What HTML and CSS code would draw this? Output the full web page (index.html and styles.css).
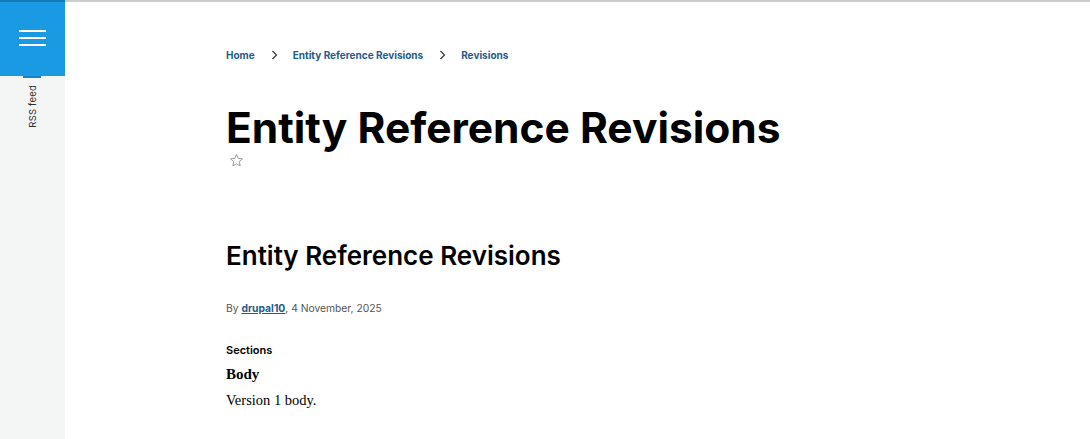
FILE: index.html
```html
<!DOCTYPE html>
<html lang="en">
<head>
<meta charset="utf-8">
<title>Entity Reference Revisions</title>
<link rel="stylesheet" href="styles.css">
</head>
<body>
<div class="page">
  <aside class="sidebar">
    <button class="menu-btn" aria-label="Main menu">
      <span class="bar"></span><span class="bar"></span><span class="bar"></span>
    </button>
    <div class="social">
      <a class="rss" href="#">RSS feed</a>
    </div>
  </aside>
  <main class="main">
    <nav class="breadcrumb">
      <a href="#">Home</a>
      <span class="sep"><svg width="7" height="10" viewBox="0 0 7 10"><path d="M1.5 1 L5.5 5 L1.5 9" fill="none" stroke="#333" stroke-width="1.2"/></svg></span>
      <a href="#">Entity Reference Revisions</a>
      <span class="sep"><svg width="7" height="10" viewBox="0 0 7 10"><path d="M1.5 1 L5.5 5 L1.5 9" fill="none" stroke="#333" stroke-width="1.2"/></svg></span>
      <a href="#">Revisions</a>
    </nav>
    <h1 class="page-title">Entity Reference Revisions</h1>
    <div class="star"><svg width="15" height="15" viewBox="0 0 24 24"><path d="M12 2.5 L14.9 8.6 L21.5 9.4 L16.6 13.9 L17.9 20.5 L12 17.2 L6.1 20.5 L7.4 13.9 L2.5 9.4 L9.1 8.6 Z" fill="none" stroke="#8a8a8a" stroke-width="1.4" stroke-linejoin="round"/></svg></div>
    <article class="node">
      <h2 class="node-title">Entity Reference Revisions</h2>
      <div class="byline">By <a href="#">drupal10</a>, 4 November, 2025</div>
      <div class="field-label">Sections</div>
      <div class="para-label">Body</div>
      <p class="para-body">Version 1 body.</p>
    </article>
  </main>
</div>
</body>
</html>
```
FILE: styles.css
```css
html, body {
  margin: 0;
  padding: 0;
  background: #fff;
  height: 100%;
}
body {
  font-family: Inter, "Liberation Sans", sans-serif;
  color: #000;
  position: relative;
}
body::before {
  content: "";
  position: absolute;
  left: 0;
  top: 0;
  right: 0;
  height: 2px;
  background: rgba(0, 0, 0, 0.2);
  z-index: 5;
}
.page {
  display: flex;
  min-height: 100%;
}
.sidebar {
  width: 65px;
  flex: 0 0 65px;
  background: #f4f6f6;
  display: flex;
  flex-direction: column;
  align-items: center;
  min-height: 439px;
}
.menu-btn {
  width: 65px;
  height: 76px;
  border: 0;
  padding: 0;
  background: #1b9ae4;
  display: flex;
  flex-direction: column;
  align-items: center;
  justify-content: center;
  gap: 5px;
  position: relative;
  cursor: pointer;
}
.menu-btn::after {
  content: "";
  position: absolute;
  left: 23px;
  width: 18px;
  bottom: -2px;
  height: 2px;
  background: #1583c6;
}
.bar {
  display: block;
  width: 27px;
  height: 2px;
  background: #fff;
}
.social {
  padding-top: 9px;
  display: flex;
  justify-content: center;
}
.rss {
  writing-mode: vertical-rl;
  transform: rotate(180deg);
  font-size: 9.5px;
  color: #2b2b2b;
  text-decoration: none;
  letter-spacing: 0.02em;
  line-height: 1;
}
.main {
  flex: 1;
  padding-left: 161px;
  padding-top: 49px;
}
.breadcrumb {
  display: flex;
  align-items: center;
  height: 12px;
  font-size: 10px;
  font-weight: 700;
}
.breadcrumb a {
  color: #1f5c8e;
  text-decoration: none;
}
.sep {
  display: flex;
  align-items: center;
  margin: 0 15px 0 16px;
}
.page-title {
  margin: 43px 0 0;
  font-size: 42.5px;
  line-height: 48px;
  font-weight: 700;
  letter-spacing: 0;
}
.star {
  margin-top: 0;
  margin-left: 3px;
  height: 16px;
}
.node {
  padding-top: 72px;
}
.node-title {
  margin: 0;
  font-size: 26px;
  line-height: 32px;
  font-weight: 600;
}
.byline {
  margin-top: 29px;
  font-size: 10.3px;
  line-height: 14px;
  color: #555;
}
.byline a {
  color: #1f5c8e;
  font-weight: 700;
}
.field-label {
  margin-top: 28px;
  font-size: 11px;
  font-weight: 600;
  line-height: 14px;
}
.para-label {
  margin-top: 8px;
  font-family: "Liberation Serif", serif;
  font-size: 15px;
  font-weight: 700;
  line-height: 18px;
}
.para-body {
  margin: 8px 0 0;
  font-family: "Liberation Serif", serif;
  font-size: 14.5px;
  line-height: 18px;
}
```
